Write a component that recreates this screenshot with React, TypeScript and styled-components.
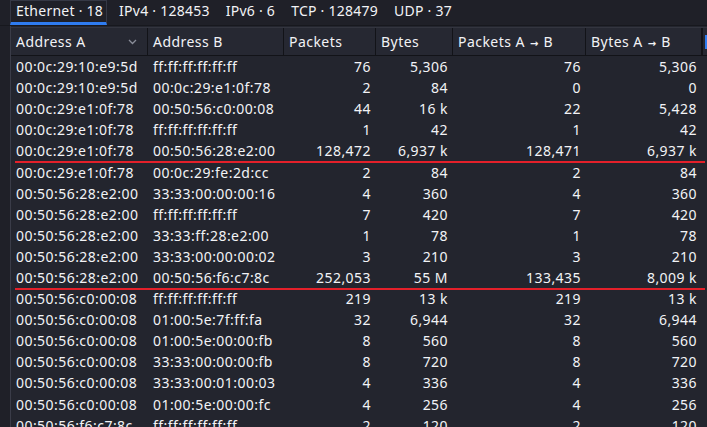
import React from 'react';
import styled, { createGlobalStyle } from 'styled-components';

const GlobalStyle = createGlobalStyle`
  html, body {
    margin: 0;
    padding: 0;
    background: #1f2028;
    overflow: hidden;
  }
  body {
    font-family: 'Noto Sans', 'Open Sans', sans-serif;
    font-size: 14px;
    letter-spacing: 0.45px;
    color: #f2f3f6;
  }
`;

const COLS = '137px 136px 92px 77px 133px 116px 1fr';

const Page = styled.div`
  width: 707px;
  height: 427px;
  display: flex;
  flex-direction: column;
  background: #1f2028;
  overflow: hidden;
`;

const TabBar = styled.div`
  display: flex;
  align-items: stretch;
  height: 27px;
  padding-left: 10px;
  border-bottom: 1px solid #17181e;
`;

const Tab = styled.div<{ $active?: boolean }>`
  padding: 0 3px 2px 5px;
  display: flex;
  align-items: center;
  white-space: nowrap;
  letter-spacing: 0.25px;
  border: 1px solid ${(p) => (p.$active ? '#353845' : 'transparent')};
  border-bottom: 3px solid ${(p) => (p.$active ? '#2f7cf0' : 'transparent')};
  margin-right: 6px;
`;

const Table = styled.div`
  margin-left: 10px;
  border-left: 1px solid #3a3c48;
  background: #23252e;
  flex: 1;
`;

const HeaderRow = styled.div`
  display: grid;
  grid-template-columns: ${COLS};
  height: 27px;
  background: #262832;
  border-top: 1px solid #33353f;
  border-bottom: 1px solid #121318;
  margin-top: 1px;
`;

const HeaderCell = styled.div`
  display: flex;
  align-items: center;
  justify-content: space-between;
  padding: 0 6px 0 5px;
  border-right: 1px solid #121318;
  white-space: nowrap;
  overflow: hidden;
`;

const Arrow = styled.span`
  font-family: 'DejaVu Sans', sans-serif;
  font-size: 10px;
  font-weight: 700;
  letter-spacing: 0;
  margin: 0 1px;
`;

const Chevron = styled.svg`
  width: 9px;
  height: 6px;
  margin-right: 4px;
`;

const Row = styled.div<{ $marked?: boolean }>`
  position: relative;
  display: grid;
  grid-template-columns: ${COLS};
  height: 21.1px;
  align-items: center;
  &::after {
    content: '';
    display: ${(p) => (p.$marked ? 'block' : 'none')};
    position: absolute;
    left: 4px;
    right: 2px;
    bottom: -2px;
    height: 2px;
    background: #e3202a;
  }
`;

const Cell = styled.div<{ $num?: boolean }>`
  padding: ${(p) => (p.$num ? '0 5px 0 0' : '0 0 0 5px')};
  text-align: ${(p) => (p.$num ? 'right' : 'left')};
  white-space: nowrap;
  overflow: hidden;
`;

const Focus = styled.div`
  border-left: 1px solid #121318;
  padding-left: 2px;
  display: flex;
  align-items: center;
  &::before {
    content: '';
    width: 3px;
    height: 14px;
    background: #2f7cf0;
  }
`;

const tabs = [
  { label: 'Ethernet · 18', active: true },
  { label: 'IPv4 · 128453' },
  { label: 'IPv6 · 6' },
  { label: 'TCP · 128479' },
  { label: 'UDP · 37' },
];

const rows: [string, string, string, string, string, string, boolean?][] = [
  ['00:0c:29:10:e9:5d', 'ff:ff:ff:ff:ff:ff', '76', '5,306', '76', '5,306'],
  ['00:0c:29:10:e9:5d', '00:0c:29:e1:0f:78', '2', '84', '0', '0'],
  ['00:0c:29:e1:0f:78', '00:50:56:c0:00:08', '44', '16 k', '22', '5,428'],
  ['00:0c:29:e1:0f:78', 'ff:ff:ff:ff:ff:ff', '1', '42', '1', '42'],
  ['00:0c:29:e1:0f:78', '00:50:56:28:e2:00', '128,472', '6,937 k', '128,471', '6,937 k', true],
  ['00:0c:29:e1:0f:78', '00:0c:29:fe:2d:cc', '2', '84', '2', '84'],
  ['00:50:56:28:e2:00', '33:33:00:00:00:16', '4', '360', '4', '360'],
  ['00:50:56:28:e2:00', 'ff:ff:ff:ff:ff:ff', '7', '420', '7', '420'],
  ['00:50:56:28:e2:00', '33:33:ff:28:e2:00', '1', '78', '1', '78'],
  ['00:50:56:28:e2:00', '33:33:00:00:00:02', '3', '210', '3', '210'],
  ['00:50:56:28:e2:00', '00:50:56:f6:c7:8c', '252,053', '55 M', '133,435', '8,009 k', true],
  ['00:50:56:c0:00:08', 'ff:ff:ff:ff:ff:ff', '219', '13 k', '219', '13 k'],
  ['00:50:56:c0:00:08', '01:00:5e:7f:ff:fa', '32', '6,944', '32', '6,944'],
  ['00:50:56:c0:00:08', '01:00:5e:00:00:fb', '8', '560', '8', '560'],
  ['00:50:56:c0:00:08', '33:33:00:00:00:fb', '8', '720', '8', '720'],
  ['00:50:56:c0:00:08', '33:33:00:01:00:03', '4', '336', '4', '336'],
  ['00:50:56:c0:00:08', '01:00:5e:00:00:fc', '4', '256', '4', '256'],
  ['00:50:56:f6:c7:8c', 'ff:ff:ff:ff:ff:ff', '2', '120', '2', '120'],
];

const App: React.FC = () => (
  <Page>
    <GlobalStyle />
    <TabBar>
      {tabs.map((t) => (
        <Tab key={t.label} $active={t.active}>
          {t.label}
        </Tab>
      ))}
    </TabBar>
    <Table>
      <HeaderRow>
        <HeaderCell>
          Address A
          <Chevron viewBox="0 0 9 6">
            <path d="M1 1l3.5 3.5L8 1" fill="none" stroke="#8a8d99" strokeWidth="1.3" />
          </Chevron>
        </HeaderCell>
        <HeaderCell>Address B</HeaderCell>
        <HeaderCell>Packets</HeaderCell>
        <HeaderCell>Bytes</HeaderCell>
        <HeaderCell>
          <span>
            Packets A <Arrow>→</Arrow> B
          </span>
        </HeaderCell>
        <HeaderCell>
          <span>
            Bytes A <Arrow>→</Arrow> B
          </span>
        </HeaderCell>
        <Focus />
      </HeaderRow>
      {rows.map((r, i) => (
        <Row key={i} $marked={r[6]}>
          <Cell>{r[0]}</Cell>
          <Cell>{r[1]}</Cell>
          <Cell $num>{r[2]}</Cell>
          <Cell $num>{r[3]}</Cell>
          <Cell $num>{r[4]}</Cell>
          <Cell $num>{r[5]}</Cell>
          <Cell />
        </Row>
      ))}
    </Table>
  </Page>
);

export default App;
